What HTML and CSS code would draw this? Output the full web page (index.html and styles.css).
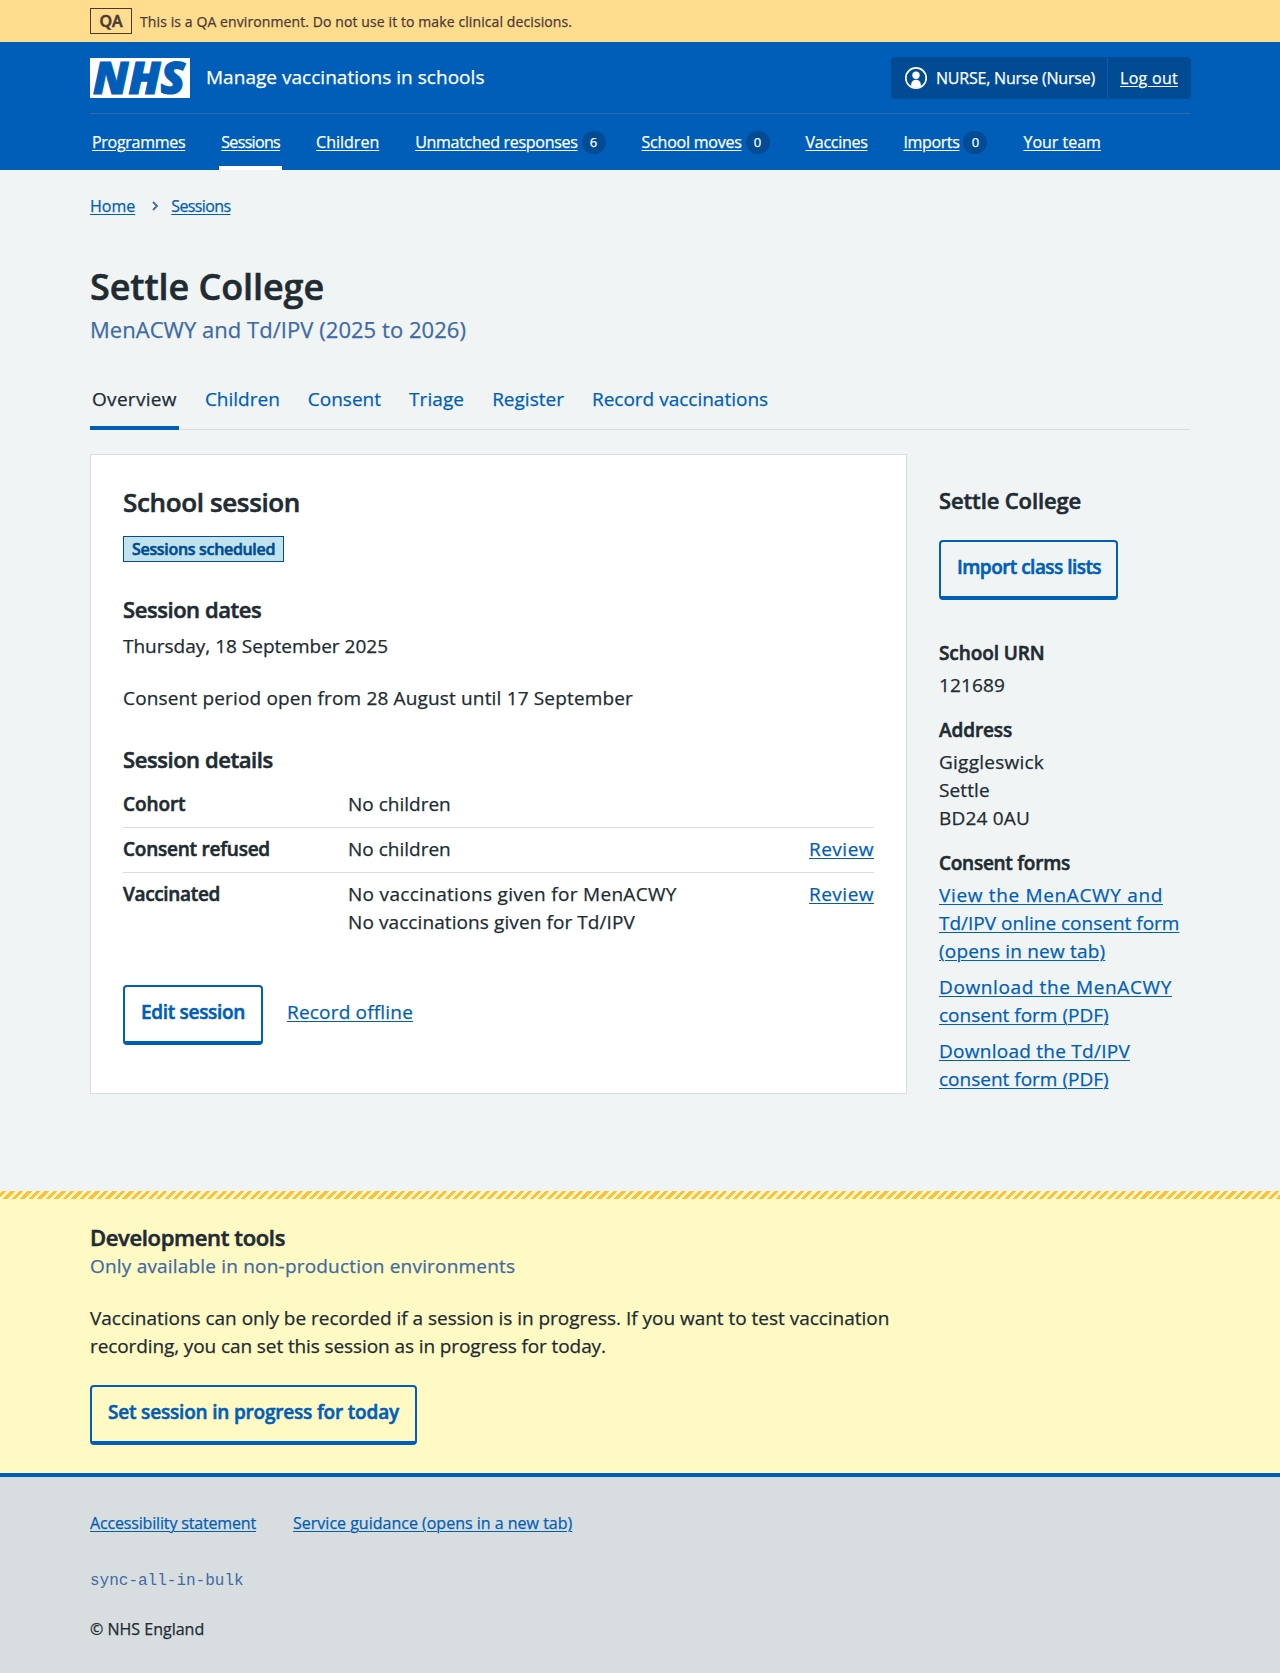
FILE: index.html
```html
<!DOCTYPE html>
<html lang="en">
<head>
<meta charset="utf-8">
<title>Settle College – Manage vaccinations in schools</title>
<link rel="stylesheet" href="styles.css">
</head>
<body>
<div class="environment">
  <div class="container environment-inner">
    <strong class="environment-tag">QA</strong>
    <span class="environment-text">This is a QA environment. Do not use it to make clinical decisions.</span>
  </div>
</div>

<header class="header">
  <div class="container">
    <div class="header-top">
      <svg class="logo" viewBox="0 0 100 40" role="img" aria-label="NHS">
        <rect width="100" height="40" fill="#fff"/>
        <text class="logo-text" x="3" y="36" textLength="92" lengthAdjust="spacingAndGlyphs">NHS</text>
      </svg>
      <span class="service-name">Manage vaccinations in schools</span>
      <div class="account">
        <div class="account-user">
          <svg class="account-icon" viewBox="0 0 24 24" aria-hidden="true">
            <circle cx="12" cy="12" r="10.2" fill="none" stroke="#fff" stroke-width="1.7"/>
            <circle cx="12" cy="9.2" r="3.7" fill="#fff"/>
            <path d="M7.2 20.5v-2.300a4.800 4.400 0 0 1 9.600 0v2.300q-4.800 2.500-9.600 0z" fill="#fff"/>
          </svg>
          <span class="account-name">NURSE, Nurse (Nurse)</span>
        </div>
        <a class="account-logout" href="#">Log out</a>
      </div>
    </div>
    <nav class="nav">
      <a class="nav-item s-26" href="#"><u>Programmes</u></a>
      <a class="nav-item nav-current s-60" href="#"><u>Sessions</u></a>
      <a class="nav-item" href="#"><u>Children</u></a>
      <a class="nav-item s-26" href="#"><u>Unmatched responses</u><span class="count">6</span></a>
      <a class="nav-item s-23" href="#"><u>School moves</u><span class="count">0</span></a>
      <a class="nav-item s-26" href="#"><u>Vaccines</u></a>
      <a class="nav-item s-37" href="#"><u>Imports</u><span class="count">0</span></a>
      <a class="nav-item" href="#"><u>Your team</u></a>
    </nav>
  </div>
</header>

<main class="container main">
  <nav class="breadcrumb">
    <a href="#">Home</a>
    <svg class="chevron" viewBox="0 0 6 10" aria-hidden="true"><path d="M1 1l4 4-4 4" fill="none" stroke="#3f6ba3" stroke-width="1.800"/></svg>
    <a class="s-60" href="#">Sessions</a>
  </nav>

  <h1 class="title">Settle College</h1>
  <p class="caption">MenACWY and Td/IPV (2025 to 2026)</p>

  <nav class="tabs">
    <a class="tab tab-current p-31" href="#">Overview</a>
    <a class="tab" href="#">Children</a>
    <a class="tab" href="#">Consent</a>
    <a class="tab p-09" href="#">Triage</a>
    <a class="tab" href="#">Register</a>
    <a class="tab" href="#">Record vaccinations</a>
  </nav>

  <div class="columns">
    <section class="card">
      <h2 class="card-title">School session</h2>
      <strong class="tag">Sessions scheduled</strong>
      <h3 class="heading dates-heading">Session dates</h3>
      <p class="dates">Thursday, 18 September 2025</p>
      <p class="consent-period p-16">Consent period open from 28 August until 17 September</p>
      <h3 class="heading details-heading">Session details</h3>
      <dl class="summary">
        <div class="row">
          <dt>Cohort</dt><dd>No children</dd>
        </div>
        <div class="row">
          <dt class="s-23">Consent refused</dt><dd>No children</dd><dd class="action"><a class="p-49" href="#">Review</a></dd>
        </div>
        <div class="row">
          <dt class="s-37">Vaccinated</dt>
          <dd><span class="p-31">No vaccinations given for MenACWY</span><br><span class="p-09">No vaccinations given for Td/IPV</span></dd>
          <dd class="action"><a class="p-49" href="#">Review</a></dd>
        </div>
      </dl>
      <div class="actions">
        <a class="button s-32" href="#">Edit session</a>
        <a class="p-19" href="#">Record offline</a>
      </div>
    </section>

    <aside class="sidebar">
      <h2 class="heading sidebar-title">Settle College</h2>
      <a class="button s-54" href="#">Import class lists</a>
      <dl class="facts">
        <dt>School URN</dt>
        <dd class="p-13">121689</dd>
        <dt>Address</dt>
        <dd><span class="p-24">Giggleswick</span><br><span class="p-09">Settle</span><br><span class="p-19">BD24 0AU</span></dd>
        <dt class="s-26">Consent forms</dt>
        <dd class="links">
          <a href="#"><span class="p-66">View the MenACWY and</span><br>Td/IPV online consent form<br><span class="p-19">(opens in new tab)</span></a>
          <a href="#"><span class="p-62">Download the MenACWY</span><br>consent form (PDF)</a>
          <a href="#"><span class="p-26">Download the Td/IPV</span><br>consent form (PDF)</a>
        </dd>
      </dl>
    </aside>
  </div>
</main>

<section class="devtools">
  <div class="container">
    <h2 class="heading devtools-title">Development tools</h2>
    <p class="devtools-caption p-19">Only available in non-production environments</p>
    <p class="devtools-text"><span class="s-02">Vaccinations can only be recorded if a session is in progress. If you want to test vaccination</span><br><span class="s-10">recording, you can set this session as in progress for today.</span></p>
    <a class="button s-19" href="#">Set session in progress for today</a>
  </div>
</section>

<footer class="footer">
  <div class="container">
    <div class="footer-links">
      <a class="s-16" href="#">Accessibility statement</a>
      <a href="#">Service guidance (opens in a new tab)</a>
    </div>
    <p class="footer-version">sync-all-in-bulk</p>
    <p class="footer-copyright">© NHS England</p>
  </div>
</footer>
</body>
</html>
```
FILE: styles.css
```css
* { box-sizing: border-box; }

body {
  margin: 0;
  background: linear-gradient(#f0f4f5 1191px, #d8dde0 1191px);
  color: #212b32;
  font: 400 19px/28px "Open Sans", "Noto Sans", sans-serif;
  -webkit-text-stroke: .25px;
}

h1, h2, h3, p, dl, dd { margin: 0; }
h1, h2, h3, dt, strong, .button { -webkit-text-stroke: .55px; }
a { color: #005eb8; text-decoration-thickness: 1px; text-underline-offset: 2px; }
.container { width: 1100px; margin: 0 auto; }

/* Letter-spacing steps: s- tightens, p- loosens, in hundredths of a pixel */
.s-02 { letter-spacing: -.02px; }
.s-10 { letter-spacing: -.1px; }
.s-16 { letter-spacing: -.16px; }
.s-60 { letter-spacing: -.6px; }
.p-09 { letter-spacing: .09px; }
.p-13 { letter-spacing: .13px; }
.p-16 { letter-spacing: .16px; }
.p-19 { letter-spacing: .19px; }
.p-24 { letter-spacing: .24px; }
.p-26 { letter-spacing: .26px; }
.p-31 { letter-spacing: .31px; }
.p-49 { letter-spacing: .49px; }
.p-62 { letter-spacing: .62px; }
.p-66 { letter-spacing: .66px; }

/* Environment banner */
.environment { height: 42px; background: #ffdc8e; color: #4a3a36; }
.environment-inner { display: flex; align-items: flex-start; padding-top: 8px; }
.environment-tag {
  width: 42px; height: 26px; border: 1px solid;
  font-size: 16px; font-weight: 600; line-height: 24px; text-align: center;
}
.environment-text { margin-left: 8px; font-size: 14px; line-height: 27px; letter-spacing: .1px; }

/* Header */
.header { height: 128px; background: #005eb8; color: #fff; }
.header-top {
  display: flex; align-items: center; height: 72px;
  border-bottom: 1px solid #3368ac;
}
.logo { width: 100px; height: 40px; overflow: visible; }
.logo-text { font: italic 800 45px "Open Sans", sans-serif; fill: #005eb8; stroke: #005eb8; stroke-width: 1.2; }
.service-name { margin: -2px 0 0 16px; letter-spacing: .03px; }
.account {
  display: flex; margin: 0 -1px 0 auto; height: 42px; padding: 1px 0;
  border-radius: 4px; background: #004b93; font-size: 16px; line-height: 40px;
}
.account-user { display: flex; align-items: center; width: 217px; padding-left: 13px; border-right: 1px solid #005eb8; }
.account-icon { width: 24px; height: 24px; margin-right: 8px; }
.account-name { letter-spacing: -.21px; white-space: nowrap; }
.account-logout { width: 83px; padding-left: 12px; color: #fff; letter-spacing: .29px; }
.nav { display: flex; gap: 32px; height: 56px; }
.nav-item {
  display: flex; align-items: flex-start; height: 56px; padding: 16px 2px 0;
  color: #fff; font-size: 16px; line-height: 24px; text-decoration: none;
}
.nav-item u { text-decoration-thickness: 1px; text-underline-offset: 2px; }
.nav-current { border-bottom: 4px solid #fff; }
.count {
  width: 24px; height: 23px; margin: 1px 0 0 4px; border-radius: 12px; background: #004b93;
  font-size: 13px; line-height: 23px; text-align: center; letter-spacing: 0;
}
.nav-item.s-23 { letter-spacing: -.23px; }
.nav-item.s-26 { letter-spacing: -.29px; }
.nav-item.s-37 { letter-spacing: -.37px; }
.nav-item.s-60 { letter-spacing: -.66px; }

/* Page heading */
.main { height: 1021px; padding-top: 24px; }
.breadcrumb { display: flex; align-items: center; font-size: 16px; line-height: 24px; }
.chevron { width: 6px; height: 10px; margin: 0 13px 0 17px; }
.title { margin-top: 46px; font-size: 36px; font-weight: 600; line-height: 46px; letter-spacing: -.1px; }
.caption { margin-top: 3px; color: #3f6ba3; font-size: 22px; line-height: 32px; letter-spacing: .04px; }

/* Tabs */
.tabs {
  display: flex; gap: 24px; height: 55px; margin-top: 30px;
  box-shadow: inset 0 -1px #d8dde0; padding-top: 9px;
}
.tab { height: 46px; padding: 1px 2px 0; text-decoration: none; }
.tab-current { border-bottom: 4px solid #005eb8; color: #212b32; }

/* Card */
.columns { display: flex; align-items: flex-start; gap: 32px; margin-top: 24px; }
.card { width: 817px; height: 640px; padding: 32px; border: 1px solid #d8dde0; background: #fff; }
.card-title { font-size: 26px; font-weight: 600; line-height: 30px; letter-spacing: -.36px; }
.tag {
  display: block; width: 161px; height: 26px; margin-top: 19px; padding-left: 8px;
  border: 1px solid #004b93; background: #c1e3ee; color: #004b93;
  font-size: 16px; font-weight: 600; line-height: 24px; letter-spacing: -.32px;
}
.heading { font-size: 22px; font-weight: 600; line-height: 32px; letter-spacing: -.44px; }
.dates-heading { margin-top: 31px; }
.dates { margin-top: 7px; }
.consent-period { margin-top: 24px; }
.details-heading { margin-top: 31px; }
.summary { margin-top: 8px; }
.row { display: flex; padding: 7px 0 9px; }
.row + .row { border-top: 1px solid #d8dde0; }
.row dt { width: 225px; }
dt { font-weight: 600; letter-spacing: -.1px; }
dt.s-23 { letter-spacing: -.24px; }
dt.s-26 { letter-spacing: -.27px; }
dt.s-37 { letter-spacing: -.34px; }
.action { margin-left: auto; }
.actions { display: flex; align-items: flex-start; gap: 24px; margin-top: 40px; }
.actions > :last-child { margin-top: 13px; }

.button {
  display: inline-block; height: 60px; padding: 11px 16px 0;
  border: 2px solid #005eb8; border-bottom-width: 4px; border-radius: 4px;
  font-weight: 600; text-decoration: none; white-space: nowrap;
}
.button.s-19 { letter-spacing: -.19px; }
.button.s-32 { letter-spacing: -.32px; }
.button.s-54 { letter-spacing: -.54px; }

/* Sidebar */
.sidebar { width: 251px; padding-top: 30px; }
.sidebar-title { margin-bottom: 24px; letter-spacing: -.13px; }
.sidebar .button { display: block; width: 179px; }
.facts { margin-top: 39px; }
.facts dt { margin-bottom: 4px; }
.facts dd { margin-bottom: 17px; white-space: nowrap; }
.links { display: flex; flex-direction: column; gap: 8px; }

/* Development tools */
.devtools {
  height: 282px; padding-top: 30px;
  background:
    repeating-linear-gradient(-45deg, #ffbf3b 0 3px, #fff9c4 3px 6px) 0 0 / 100% 8px no-repeat,
    #fff9c4;
}
.devtools-title { letter-spacing: -.35px; }
.devtools-caption { margin-top: -1px; color: #3f6ba3; }
.devtools-text { margin: 24px 0 25px; white-space: nowrap; }

/* Footer */
.footer { height: 200px; padding-top: 34px; border-top: 4px solid #005eb8; background: #d8dde0; font-size: 16px; line-height: 24px; }
.footer-links { display: flex; gap: 37px; }
.footer-version { margin-top: 34px; color: #3f6ba3; font-family: "Liberation Mono", monospace; -webkit-text-stroke: 0; }
.footer-copyright { margin-top: 24px; }
```
